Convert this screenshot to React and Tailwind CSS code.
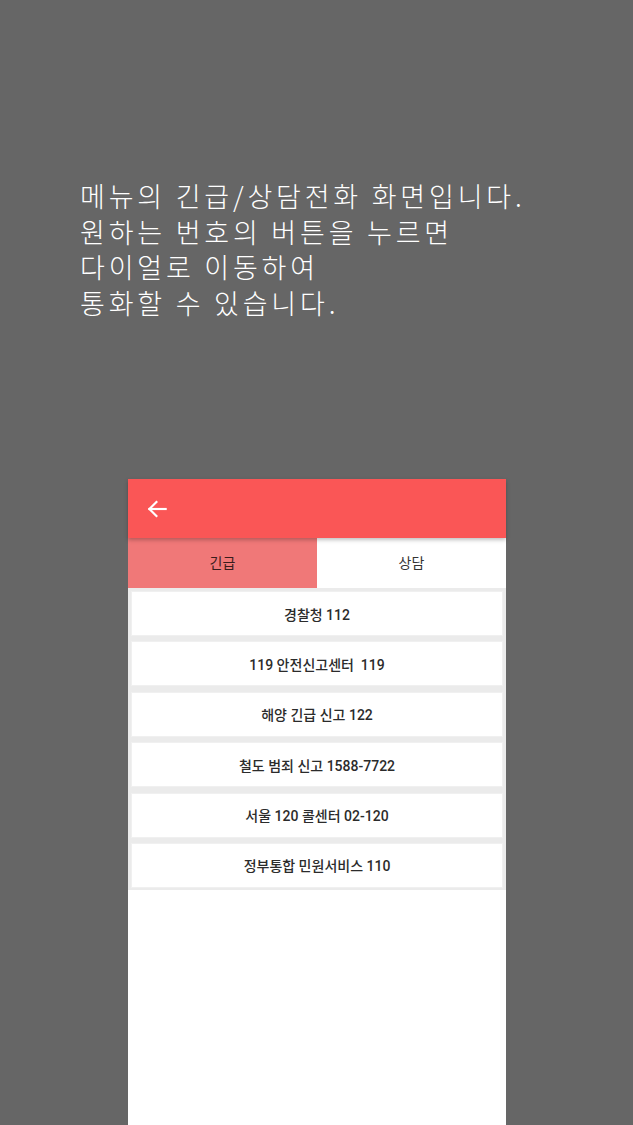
import { useState } from 'react';

const EMERGENCY = [
  '경찰청 112',
  '119 안전신고센터  119',
  '해양 긴급 신고 122',
  '철도 범죄 신고 1588-7722',
  '서울 120 콜센터 02-120',
  '정부통합 민원서비스 110',
];

function BackArrow() {
  return (
    <svg className="w-[26px] h-[26px]" viewBox="0 0 24 24" fill="none" stroke="white" strokeWidth={2} strokeLinecap="square">
      <path d="M20 12H5" />
      <path d="M11.5 5.5L5 12l6.5 6.5" />
    </svg>
  );
}

export default function App() {
  const [tab, setTab] = useState('emergency');

  return (
    <div
      className="h-[1125px] bg-[#666666] flex flex-col overflow-hidden"
      style={{ fontFamily: 'Roboto, "Noto Sans CJK KR", sans-serif' }}
    >
      {/* 안내 문구 */}
      <div
        className="h-[479px] shrink-0 pl-[80px] pt-[178px] text-white text-[27px] font-light leading-[35.5px] tracking-[3.8px]"
        style={{ fontFamily: '"Noto Sans CJK KR", sans-serif' }}
      >
        <p>메뉴의 긴급/상담전화 화면입니다.</p>
        <p>원하는 번호의 버튼을 누르면</p>
        <p>다이얼로 이동하여</p>
        <p>통화할 수 있습니다.</p>
      </div>

      {/* 폰 화면 */}
      <div className="ml-[128px] w-[378px] flex-1 bg-white flex flex-col">
        <div className="relative z-10 h-[59px] bg-[#fa5656] flex items-center pl-[16px] shadow-[0_2px_4px_rgba(0,0,0,0.25)]">
          <BackArrow />
        </div>

        <div className="flex h-[50px]">
          <button
            onClick={() => setTab('emergency')}
            className={`flex-1 flex items-center justify-center text-[14px] ${tab === 'emergency' ? 'bg-[#f07878] text-[#3a1c1c]' : 'bg-white text-[#333333]'}`}
          >
            긴급
          </button>
          <button
            onClick={() => setTab('consult')}
            className={`flex-1 flex items-center justify-center text-[14px] ${tab === 'consult' ? 'bg-[#f07878] text-[#3a1c1c]' : 'bg-white text-[#333333]'}`}
          >
            상담
          </button>
        </div>

        <div className="bg-[#ebebeb] px-[3px] pt-[3px] pb-[2px] flex flex-col gap-[5.4px]">
          {EMERGENCY.map(label => (
            <button
              key={label}
              className="h-[45px] pt-[3px] bg-white border border-[#f0f0f0] flex items-center justify-center text-[14px] font-medium text-[#2b2b2b] whitespace-pre"
            >
              {label}
            </button>
          ))}
        </div>
      </div>
    </div>
  );
}
